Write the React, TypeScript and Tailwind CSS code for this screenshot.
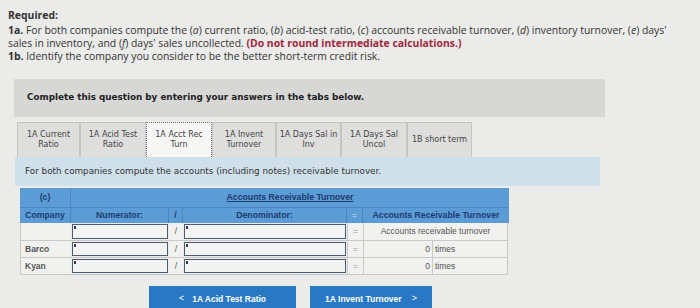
import React from "react";

const tabs = [
  { l1: "1A Current", l2: "Ratio", w: "w-[63px]" },
  { l1: "1A Acid Test", l2: "Ratio", w: "w-[66px]" },
  { l1: "1A Acct Rec", l2: "Turn", w: "w-[66px]", active: true },
  { l1: "1A Invent", l2: "Turnover", w: "w-[64px]" },
  { l1: "1A Days Sal in", l2: "Inv", w: "w-[65px]" },
  { l1: "1A Days Sal", l2: "Uncol", w: "w-[66px]" },
  { l1: "1B short term", l2: "", w: "w-[65px]" },
];

function Input() {
  return (
    <div className="relative h-full w-full bg-[#f3f3f1] border-[1.5px] border-[#4f5a74]">
      <div className="absolute left-[1px] top-[1px] w-[2px] h-[3px] bg-[#2b3a66]" />
    </div>
  );
}

function DataRow({ name, value, h }: { name: string; value?: boolean; h: string }) {
  return (
    <div className={`flex ${h} text-[8.5px]`}>
      <div className="w-[51px] border-l border-b border-[#c9c9c7] bg-[#f1f1ef] pl-[4px] flex items-center text-[#555] font-bold">{name}</div>
      <div className="w-[98px] border-b border-[#c9c9c7] p-[1px]"><Input /></div>
      <div className="w-[14px] border-b border-[#c9c9c7] bg-[#f1f1ef] flex items-center justify-center text-[#555]">/</div>
      <div className="w-[164px] border-b border-[#c9c9c7] p-[1px]"><Input /></div>
      <div className="w-[16px] border-b border-l border-[#c9c9c7] bg-[#f1f1ef] flex items-center justify-center text-[#999]">=</div>
      {value ? (
        <>
          <div className="w-[69px] border-b border-l border-[#c9c9c7] bg-[#f1f1ef] flex items-center justify-end pr-[2px] text-[#555]">0</div>
          <div className="w-[76px] border-b border-l border-r border-[#c9c9c7] bg-[#f1f1ef] flex items-center pl-[2px] text-[#555]">times</div>
        </>
      ) : (
        <div className="w-[145px] border-b border-l border-r border-[#c9c9c7] bg-[#f1f1ef] flex items-center justify-center text-[#555]">Accounts receivable turnover</div>
      )}
    </div>
  );
}

export default function App() {
  return (
    <div className="w-[700px] h-[308px] overflow-hidden bg-[#ebebe9] relative" style={{ fontFamily: "'Open Sans', sans-serif" }}>
      <div className="pl-[8px] pt-[9px] text-[10.4px] leading-[13px] text-[#333]">
        <div className="font-bold mb-[2px]">Required:</div>
        <div>
          <span className="font-bold">1a.</span> For both companies compute the (<i>a</i>) current ratio, (<i>b</i>) acid-test ratio, (<i>c</i>) accounts receivable turnover, (<i>d</i>) inventory turnover, (<i>e</i>) days'
        </div>
        <div>
          sales in inventory, and (<i>f</i>) days' sales uncollected. <span className="font-bold text-[#a0283c]">(Do not round intermediate calculations.)</span>
        </div>
        <div>
          <span className="font-bold">1b.</span> Identify the company you consider to be the better short-term credit risk.
        </div>
      </div>

      <div className="ml-[14px] mt-[16px] w-[591px] h-[38px] bg-[#d7d7d5] flex items-center pl-[13px]" style={{ fontFamily: "'DejaVu Sans', Verdana, sans-serif" }}>
        <span className="text-[8.8px] font-bold text-[#222]">Complete this question by entering your answers in the tabs below.</span>
      </div>

      <div className="ml-[17px] mt-[5px] flex h-[35px]" style={{ fontFamily: "'DejaVu Sans', Verdana, sans-serif" }}>
        {tabs.map((t, i) => (
          <div
            key={i}
            className={`${t.w} flex flex-col items-center justify-center text-[8px] leading-[10px] text-[#444] ${
              t.active
                ? "bg-[#f6f6f4] border border-dotted border-[#777] border-b-0"
                : "bg-[#dededc] border border-[#c4c4c2] border-b-0"
            }`}
          >
            <div>{t.l1}</div>
            {t.l2 && <div>{t.l2}</div>}
          </div>
        ))}
      </div>

      <div className="ml-[15px] w-[585px] h-[29px] bg-[#cfe0ea] flex items-center pl-[10px]" style={{ fontFamily: "'DejaVu Sans', Verdana, sans-serif" }}>
        <span className="text-[8.8px] text-[#333]">For both companies compute the accounts (including notes) receivable turnover.</span>
      </div>

      <div className="ml-[20px] mt-[2px] w-[489px]" style={{ fontFamily: "'Liberation Sans', Arial, sans-serif" }}>
        <div className="flex h-[19px] bg-[#5b9bd6] text-[8.7px] font-bold text-[#1d3c6e]">
          <div className="w-[51px] flex items-center justify-center border-r border-[#4a86c0]">(c)</div>
          <div className="flex-1 flex items-center justify-center underline">Accounts Receivable Turnover</div>
        </div>
        <div className="flex h-[16px] bg-[#5b9bd6] text-[8.7px] font-bold text-[#1d3c6e] border-t border-[#4a86c0]">
          <div className="w-[51px] flex items-center justify-center border-r border-[#4a86c0]">Company</div>
          <div className="w-[98px] flex items-center justify-center border-r border-[#4a86c0]">Numerator:</div>
          <div className="w-[14px] flex items-center justify-center border-r border-[#4a86c0]">/</div>
          <div className="w-[164px] flex items-center justify-center border-r border-[#4a86c0]">Denominator:</div>
          <div className="w-[16px] flex items-center justify-center border-r border-[#4a86c0] font-normal text-[#cfe2f4]">=</div>
          <div className="flex-1 flex items-center justify-center">Accounts Receivable Turnover</div>
        </div>
        <DataRow name="" h="h-[18px]" />
        <DataRow name="Barco" value h="h-[17px]" />
        <DataRow name="Kyan" value h="h-[17px]" />
      </div>

      <div className="flex mt-[11px] ml-[149px] gap-[14px] text-white text-[8.5px] font-bold" style={{ fontFamily: "'Liberation Sans', Arial, sans-serif" }}>
        <div className="w-[147px] h-[26px] bg-[#2878c6] flex items-center justify-center gap-[8px]">
          <span className="text-[9px] font-normal">&lt;</span>
          <span>1A Acid Test Ratio</span>
        </div>
        <div className="w-[122px] h-[26px] bg-[#2878c6] flex items-center justify-center gap-[10px]">
          <span>1A Invent Turnover</span>
          <span className="text-[9px] font-normal">&gt;</span>
        </div>
      </div>
    </div>
  );
}
